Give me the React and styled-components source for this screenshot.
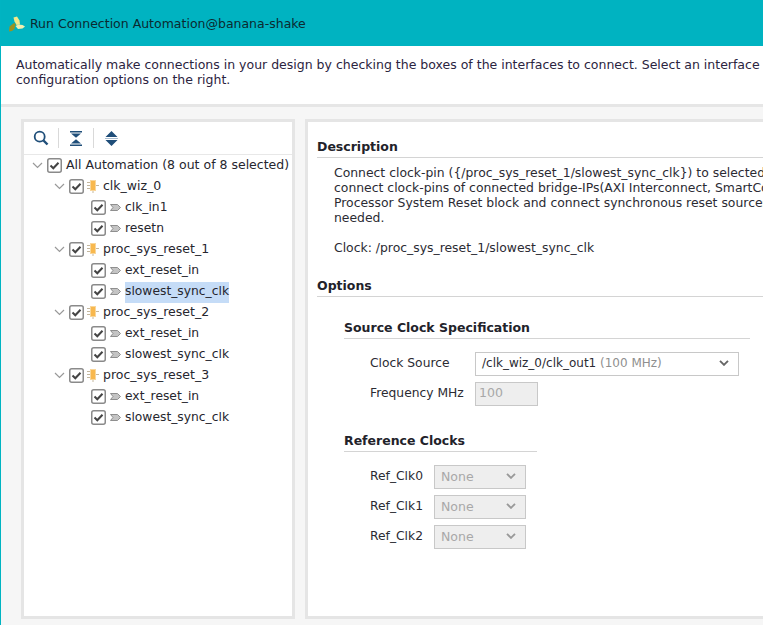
import React from "react";
import styled, { createGlobalStyle } from "styled-components";

const Global = createGlobalStyle`
  html, body { margin: 0; padding: 0; height: 100%; overflow: hidden; }
  body { font-family: "DejaVu Sans", sans-serif; font-size: 12.5px; color: #26262e; }
  #root { height: 625px; }
`;

const Page = styled.div`
  width: 763px;
  height: 625px;
  display: flex;
  flex-direction: column;
  overflow: hidden;
  box-sizing: border-box;
  border-left: 1px solid #00b4c2;
  background: #f6f6f6;
`;

const TitleBar = styled.div`
  height: 45px;
  margin-left: -1px;
  flex: none;
  background: #00b3c1;
  display: flex;
  align-items: center;
  padding: 1px 0 0 9px;
  gap: 4px;
  color: #0b2a30;
  white-space: nowrap;
`;

const Intro = styled.div`
  height: 58px;
  flex: none;
  box-sizing: border-box;
  background: #fff;
  padding: 11px 0 0 15px;
  line-height: 15px;
  white-space: nowrap;
  color: #2b2440;
`;

const Rule = styled.div`
  height: 3px;
  flex: none;
  background: #e6e6e6;
`;

const Body = styled.div`
  flex: 1;
  min-height: 0;
  display: flex;
  gap: 10px;
  padding: 12px 0 6px 20px;
`;

const TreePanel = styled.div`
  width: 274px;
  flex: none;
  box-sizing: border-box;
  border: 3px solid #e5e5e5;
  background: #fff;
`;

const Toolbar = styled.div`
  height: 33px;
  box-sizing: border-box;
  display: flex;
  align-items: center;
  padding: 0 0 0 8px;
  border-bottom: 1px solid #e8e8e8;
`;

const ToolButton = styled.span`
  display: flex;
  width: 18px;
  justify-content: center;
`;

const ToolSep = styled.span`
  width: 1px;
  height: 20px;
  background: #d9d9d9;
  margin: 0 8px;
`;

const TreeRow = styled.div`
  height: 21px;
  display: flex;
  align-items: center;
  padding-left: ${(p) => p.$indent}px;
  white-space: nowrap;
`;

const Twisty = styled.svg`
  width: 11px;
  height: 7px;
  flex: none;
  margin-right: 4px;
`;

const RowLabel = styled.span`
  margin-left: 4px;
  height: 21px;
  line-height: 19px;
`;

const PinLabel = styled.span`
  margin: 1px 0 0 4px;
  height: 21px;
  align-self: flex-start;
  line-height: 18px;
  font-size: 12.3px;
  background: ${(p) => (p.$selected ? "#c5dcf7" : "transparent")};
`;

const DetailPanel = styled.div`
  flex: 1;
  box-sizing: border-box;
  border: 3px solid #e5e5e5;
  border-right: 0;
  background: #fff;
  padding: 18px 0 0 9px;
`;

const SectionTitle = styled.div`
  font-weight: bold;
  line-height: 13px;
  padding-bottom: 4px;
  border-bottom: 1px solid #d4d4d4;
  color: #22222a;
`;

const Paragraph = styled.div`
  padding: 7px 0 0 17px;
  line-height: 15px;
  font-size: 12.4px;
  white-space: nowrap;
  height: 121px;
  box-sizing: border-box;
  overflow: hidden;
  color: #2b2b33;
`;

const Group = styled.div`
  margin: ${(p) => p.$top}px 0 0 27px;
  width: ${(p) => p.$width}px;
`;

const FormRows = styled.div`
  display: flex;
  flex-direction: column;
  gap: 6px;
  padding: 13px 0 0 26px;
`;

const FormRow = styled.div`
  display: flex;
  align-items: center;
  height: 24px;
`;

const FieldLabel = styled.span`
  width: ${(p) => p.$width}px;
  flex: none;
  padding-bottom: 2px;
  font-size: 12.3px;
  color: #2b2b33;
  white-space: nowrap;
`;

const Select = styled.div`
  width: ${(p) => p.$width}px;
  height: 24px;
  box-sizing: border-box;
  display: flex;
  align-items: center;
  justify-content: space-between;
  padding: 0 9px 2px 6px;
  border: 1px solid #c8c8c8;
  background: ${(p) => (p.$disabled ? "#eeeeee" : "#fff")};
  color: ${(p) => (p.$disabled ? "#a8a8a8" : "#2b2b33")};
`;

const SourceValue = styled.span`
  font-size: 12px;
`;

const Muted = styled.span`
  color: #8f8f8f;
`;

const ReadOnly = styled.div`
  width: 63px;
  height: 24px;
  box-sizing: border-box;
  border: 1px solid #c8c8c8;
  background: #eeeeee;
  color: #a8a8a8;
  line-height: 20px;
  padding-left: 3px;
`;

const Chevron = ({ color = "#666" }) => (
  <svg width="10" height="6" viewBox="0 0 10 6">
    <path d="M1 .8l4 4 4-4" fill="none" stroke={color} strokeWidth="1.900" />
  </svg>
);

const Logo = () => (
  <svg width="17" height="16" viewBox="0 0 17 16">
    <path d="M4.500 1.500L8 .5l2.500 4 .5 4-3.500.5-2-3.500z" fill="#f3e98a" />
    <path d="M6.500 10l3-1.500 4 .5 2.500 1.500-2.500 2-4.500.5z" fill="#f1efb0" />
    <path d="M0 15.500l.5-5 4.500-3.500 1.500 1-1 5-2.500 2z" fill="#9a9420" />
  </svg>
);

const SearchIcon = () => (
  <svg width="16" height="16" viewBox="0 0 16 16">
    <circle cx="6.700" cy="6.700" r="5" fill="none" stroke="#1f4e79" strokeWidth="1.800" />
    <path d="M10.500 10.500l4 4" stroke="#1f4e79" strokeWidth="2.400" />
  </svg>
);

const CollapseIcon = () => (
  <svg width="14" height="15" viewBox="0 0 14 15">
    <path d="M1 0h12v1.500H1zM1 13.500h12V15H1z" fill="#1f4e79" />
    <path d="M2 2.500h10L7 6.800zM2 12.500h10L7 8.200z" fill="#1f4e79" />
  </svg>
);

const ExpandIcon = () => (
  <svg width="13" height="15" viewBox="0 0 13 15">
    <path d="M6.500 0L12.500 6H.5zM6.500 15L.5 9h12z" fill="#1f4e79" />
    <path d="M0 7h13v1H0z" fill="#a9bdd0" />
  </svg>
);

const Checkbox = () => (
  <svg width="15" height="15" viewBox="0 0 15 15" style={{ flex: "none" }}>
    <rect x="0.750" y="0.750" width="13.500" height="13.500" rx="2" fill="#fff" stroke="#8a8a8a" strokeWidth="1.500" />
    <path d="M3.500 7.500l2.800 2.800 5.200-5.600" fill="none" stroke="#444" strokeWidth="2" />
  </svg>
);

const BlockIcon = () => (
  <svg width="12" height="13" viewBox="0 0 12 13" style={{ flex: "none", marginLeft: 3 }}>
    <path d="M0 2.500h3.500M0 5.500h3.500M0 8.500h3.500M8.500 5.500H12" stroke="#c4b79e" strokeWidth="1" />
    <rect x="3.500" y="0.500" width="5" height="10" fill="#f8b84e" stroke="#f9d69a" />
    <path d="M6 11v2" stroke="#c4b79e" />
  </svg>
);

const PinIcon = () => (
  <svg width="11" height="7" viewBox="0 0 11 7" style={{ flex: "none", marginLeft: 4 }}>
    <path d="M0.500 0.500h7l3 3-3 3h-7l2.500-3z" fill="#c4c4c4" stroke="#8f8f8f" />
  </svg>
);

const TwistyOpen = () => (
  <Twisty viewBox="0 0 11 7">
    <path d="M1 1l4.500 4.500L10 1" fill="none" stroke="#999" strokeWidth="1.200" />
  </Twisty>
);

const blocks = [
  { name: "clk_wiz_0", pins: ["clk_in1", "resetn"] },
  { name: "proc_sys_reset_1", pins: ["ext_reset_in", "slowest_sync_clk"], selected: "slowest_sync_clk" },
  { name: "proc_sys_reset_2", pins: ["ext_reset_in", "slowest_sync_clk"] },
  { name: "proc_sys_reset_3", pins: ["ext_reset_in", "slowest_sync_clk"] },
];

export default function App() {
  return (
    <>
      <Global />
      <Page>
        <TitleBar>
          <Logo />
          <span>Run Connection Automation@banana-shake</span>
        </TitleBar>
        <Intro>
          Automatically make connections in your design by checking the boxes of the interfaces to connect. Select an interface
          <br />
          configuration options on the right.
        </Intro>
        <Rule />
        <Body>
          <TreePanel>
            <Toolbar>
              <ToolButton><SearchIcon /></ToolButton>
              <ToolSep />
              <ToolButton><CollapseIcon /></ToolButton>
              <ToolSep />
              <ToolButton><ExpandIcon /></ToolButton>
            </Toolbar>
            <TreeRow $indent={8}>
              <TwistyOpen />
              <Checkbox />
              <RowLabel>All Automation (8 out of 8 selected)</RowLabel>
            </TreeRow>
            {blocks.map((b) => (
              <React.Fragment key={b.name}>
                <TreeRow $indent={30}>
                  <TwistyOpen />
                  <Checkbox />
                  <BlockIcon />
                  <RowLabel>{b.name}</RowLabel>
                </TreeRow>
                {b.pins.map((pin) => (
                  <TreeRow $indent={67} key={pin}>
                    <Checkbox />
                    <PinIcon />
                    <PinLabel $selected={b.selected === pin}>{pin}</PinLabel>
                  </TreeRow>
                ))}
              </React.Fragment>
            ))}
          </TreePanel>
          <DetailPanel>
            <SectionTitle>Description</SectionTitle>
            <Paragraph>
              Connect clock-pin ({"{"}/proc_sys_reset_1/slowest_sync_clk{"}"}) to selected
              <br />
              connect clock-pins of connected bridge-IPs(AXI Interconnect, SmartConnect
              <br />
              Processor System Reset block and connect synchronous reset sources
              <br />
              needed.
              <br />
              <br />
              Clock: /proc_sys_reset_1/slowest_sync_clk
            </Paragraph>
            <SectionTitle>Options</SectionTitle>
            <Group $top={24} $width={406}>
              <SectionTitle>Source Clock Specification</SectionTitle>
              <FormRows>
                <FormRow>
                  <FieldLabel $width={105}>Clock Source</FieldLabel>
                  <Select $width={264}>
                    <SourceValue>/clk_wiz_0/clk_out1 <Muted>(100 MHz)</Muted></SourceValue>
                    <Chevron />
                  </Select>
                </FormRow>
                <FormRow>
                  <FieldLabel $width={105}>Frequency MHz</FieldLabel>
                  <ReadOnly>100</ReadOnly>
                </FormRow>
              </FormRows>
            </Group>
            <Group $top={28} $width={193}>
              <SectionTitle>Reference Clocks</SectionTitle>
              <FormRows>
                {["Ref_Clk0", "Ref_Clk1", "Ref_Clk2"].map((r) => (
                  <FormRow key={r}>
                    <FieldLabel $width={64}>{r}</FieldLabel>
                    <Select $width={92} $disabled>
                      <span>None</span>
                      <Chevron color="#999" />
                    </Select>
                  </FormRow>
                ))}
              </FormRows>
            </Group>
          </DetailPanel>
        </Body>
      </Page>
    </>
  );
}
